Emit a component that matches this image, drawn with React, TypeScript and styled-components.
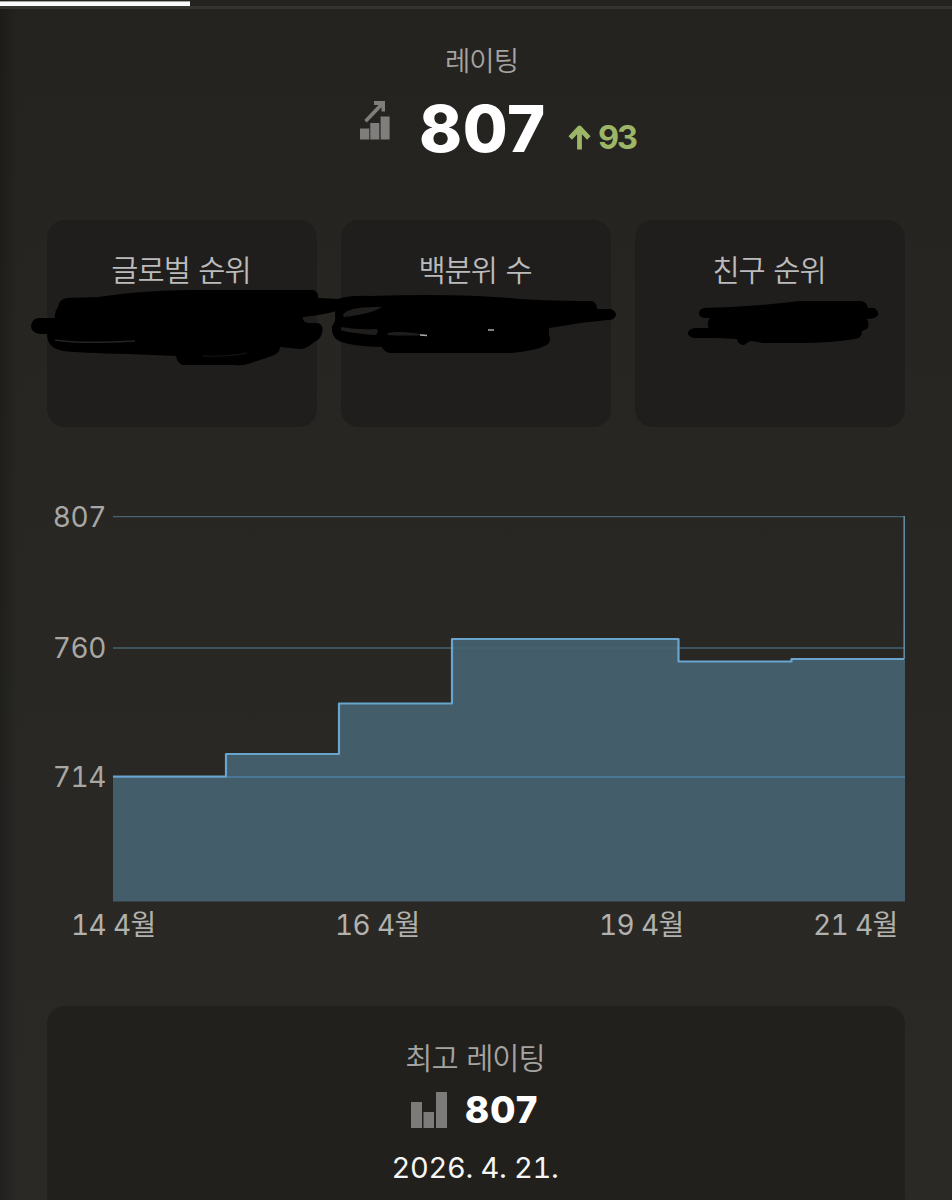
import React from 'react';
import styled, { createGlobalStyle } from 'styled-components';

const GlobalStyle = createGlobalStyle`
  * { box-sizing: border-box; }
  html, body { margin: 0; background: #272623; }
  body { font-family: Inter, "Noto Sans CJK KR", sans-serif; overflow: hidden; }
`;

const Screen = styled.main`
  width: 952px;
  height: 1200px;
  overflow: hidden;
  background:
    linear-gradient(90deg, rgba(0, 0, 0, 0.22), rgba(0, 0, 0, 0) 18px),
    linear-gradient(#242320 0, #252421 180px, #272622 440px, #292825 800px, #2a2926 1200px);
`;

const TabTrack = styled.div`
  height: 9px;
  padding-top: 1px;
  background: linear-gradient(transparent 6px, #353431 6px);
`;

const TabIndicator = styled.div`
  width: 190px;
  height: 5px;
  background: linear-gradient(#a5a5a4 1px, #fafafa 1px);
`;

const Hero = styled.header`
  height: 211px;
  padding-top: 30px;
  display: flex;
  flex-direction: column;
  align-items: center;
`;

const Label = styled.div<{ $color?: string; $size?: number }>`
  font-family: "Noto Sans CJK KR", sans-serif;
  font-weight: 350;
  font-size: ${({ $size }) => $size ?? 29.5}px;
  line-height: 40px;
  letter-spacing: -1px;
  word-spacing: 3px;
  margin-right: 2px;
  color: ${({ $color }) => $color ?? '#a5a4a2'};
  white-space: nowrap;
`;

const HeroTitle = styled.div`
  padding-left: 13px;
`;

const HeroRow = styled.div`
  display: flex;
  width: 276px;
  height: 80px;
  margin: 10px 0 0 44px;
`;

const TrendIcon = styled.svg`
  width: 30px;
  height: 39px;
  margin-top: 12px;
  flex: none;
`;

const Rating = styled.div`
  margin-left: 29px;
  width: 127px;
  font-size: 65px;
  font-weight: 800;
  line-height: 80px;
  letter-spacing: 0.6px;
  color: #fff;
`;

const Delta = styled.div`
  display: flex;
  margin: 29px 0 0 22px;
  gap: 7px;
  font-size: 32.5px;
  font-weight: 750;
  line-height: 40px;
  letter-spacing: -2px;
  color: #9cb567;
`;

const ArrowIcon = styled.svg`
  width: 23px;
  height: 26px;
  margin-top: 6px;
`;

const Ranks = styled.section`
  position: relative;
  display: grid;
  grid-template-columns: repeat(3, 270px);
  gap: 24px;
  padding-left: 47px;
  height: 207px;
`;

const RankCard = styled.div`
  display: flex;
  justify-content: center;
  padding-top: 28px;
  border-radius: 18px;
  background: #1f1e1c;
`;

const Marker = styled.svg`
  position: absolute;
  left: 0;
  top: 0;
  width: 952px;
  height: 207px;
`;

const Chart = styled.section`
  display: grid;
  grid-template-columns: 106px 792px;
  column-gap: 7px;
  margin-top: 89px;
`;

const YAxis = styled.div`
  display: flex;
  flex-direction: column;
  align-items: flex-end;
  margin-top: -19px;
`;

const YTick = styled.div<{ $space: number }>`
  height: ${({ $space }) => $space}px;
  font-size: 28px;
  font-variant-numeric: tabular-nums;
  line-height: 40px;
  letter-spacing: -0.4px;
  color: #a8a7a4;
`;

const Plot = styled.svg`
  display: block;
  width: 792px;
  height: 386px;
`;

const XAxis = styled.div`
  display: grid;
  grid-template-columns: 264px 264px 214px auto;
  padding-left: 71px;
  height: 104px;
`;

const XTick = styled.div`
  padding-top: 3px;
  font-family: Inter, "Noto Sans CJK KR", sans-serif;
  font-weight: 380;
  font-size: 28px;
  font-variant-numeric: tabular-nums;
  line-height: 40px;
  letter-spacing: -0.6px;
  color: #b2b1ae;
  white-space: nowrap;
`;

const PeakCard = styled.section`
  display: flex;
  flex-direction: column;
  align-items: center;
  width: 858px;
  height: 260px;
  margin-left: 47px;
  padding-top: 30px;
  border-radius: 18px;
  background: #21201d;
`;

const PeakRow = styled.div`
  display: flex;
  align-items: center;
  gap: 18px;
  height: 44px;
  margin: 12px 3px 0 0;
`;

const BarsIcon = styled.svg`
  width: 36px;
  height: 36px;
`;

const PeakValue = styled.div`
  font-size: 37px;
  font-weight: 800;
  line-height: 44px;
  letter-spacing: 0.8px;
  color: #fff;
`;

const PeakDate = styled.div`
  margin: 16px 2px 0 0;
  font-size: 29px;
  font-variant-numeric: tabular-nums;
  line-height: 40px;
  letter-spacing: -0.3px;
  color: #f6f6f5;
`;

const ranks = ['글로벌 순위', '백분위 수', '친구 순위'];
const yTicks = [
  { value: 807, space: 131 },
  { value: 760, space: 129 },
  { value: 714, space: 40 },
];
const xTicks = ['14 4월', '16 4월', '19 4월', '21 4월'];
const steps = 'M0 260.5H113V238H226V187.5H339V123H565.5V145.5H678.5V143H791';

export default function App() {
  return (
    <Screen>
      <GlobalStyle />
      <TabTrack><TabIndicator /></TabTrack>
      <Hero>
        <HeroTitle><Label $size={27.5}>레이팅</Label></HeroTitle>
        <HeroRow>
          <TrendIcon viewBox="0 0 30 39" fill="#7f7e7d">
            <path d="M0 27.500h9.300V38.500H0zM10.300 22h9v16.500h-9zM20.600 15.500h9v23h-9z" />
            <path d="M14 0h11v10.500h-3.500V6.300L6.800 21.500l-2.600-2.600L18.500 4H14z" />
          </TrendIcon>
          <Rating>807</Rating>
          <Delta>
            <ArrowIcon viewBox="0 0 23 26" fill="none" stroke="#9cb567" strokeWidth="4.800">
              <path d="M11.500 25.500V4M2.200 14L11.500 4L20.800 14" strokeLinejoin="round" />
            </ArrowIcon>
            93
          </Delta>
        </HeroRow>
      </Hero>

      <Ranks>
        {ranks.map((name) => (
          <RankCard key={name}><Label $color="#bcbbbc">{name}</Label></RankCard>
        ))}
        <Marker viewBox="0 220 952 207" fill="#000">
          <path d="M38 318H55Q54 312 58 307Q59 299 67 298L98 297Q136 291 187 290H313Q319 292 318 298L338 299Q346 301 345 307Q338 313 303 317Q302 322 309 323H318Q324 325 322 333Q321 339 313 343Q306 349 300 349L280 347Q280 353 272 356L248 364Q242 366 234 365H183Q177 363 176 356L128 354Q80 353 63 351Q47 348 47 334H39Q31 332 31 326Q32 319 38 318Z" />
          <path d="M55 340Q80 344 135 341" fill="none" stroke="#24231f" strokeWidth="1.5" />
          <path d="M203 356Q230 357 247 353" fill="none" stroke="#171715" strokeWidth="1" />
          <path fillRule="evenodd" d="M338 299Q350 295 370 296Q450 293 510 298Q536 301 592 301Q597 303 597 309L611 309Q616 311 616 315Q615 320 608 320L580 323Q570 325 549 328L549 335Q552 341 547 345Q535 351 511 353H390Q384 352 382 347Q345 346 336 339Q331 334 332 326Q336 322 335 315Q335 307 338 299ZM343 315Q347 306 382 307Q371 314 344 317ZM341 327Q358 330 377 329Q379 333 375 335Q348 333 341 330ZM388 333Q401 330 427 335Q405 336 387 335Z" />
          <path d="M420 335L427 335.500M488 330H494" fill="none" stroke="#aaa" strokeWidth="1.5" />
          <path d="M704 308Q750 307 800 301H861Q867 302 868 308L874 308Q879 311 878 315Q876 319 867 319Q870 325 867 329L862 331Q862 338 855 339Q830 343 800 343H763Q754 341 750 341L744 345Q738 345 737 339L716 338H693Q687 336 688 332Q690 328 697 328H709Q706 323 710 318H704Q699 317 699 313Q699 309 704 308Z" />
        </Marker>
      </Ranks>

      <Chart>
        <YAxis>
          {yTicks.map((tick) => <YTick key={tick.value} $space={tick.space}>{tick.value}</YTick>)}
        </YAxis>
        <Plot viewBox="0 0 792 386" fill="none">
          <path d={`${steps}H792V385.500H0Z`} fill="#435d6b" />
          <path d="M0 .500H792M0 132H792" stroke="#466372" strokeWidth="1.300" />
          <path d="M0 261H792" stroke="#4f7fa5" strokeWidth="1.400" />
          <path d="M791.200 0V143" stroke="#62899f" strokeWidth="1.600" />
          <path d={steps} stroke="#69a5ce" strokeWidth="2.200" strokeLinejoin="round" />
        </Plot>
      </Chart>
      <XAxis>
        {xTicks.map((tick) => <XTick key={tick}>{tick}</XTick>)}
      </XAxis>

      <PeakCard>
        <Label>최고 레이팅</Label>
        <PeakRow>
          <BarsIcon viewBox="0 0 36 36" fill="#7c7b7a">
            <path d="M0 10h11v26H0zM12.500 20h10.500v16H12.500zM25 0h11v36H25z" />
          </BarsIcon>
          <PeakValue>807</PeakValue>
        </PeakRow>
        <PeakDate>2026. 4. 21.</PeakDate>
      </PeakCard>
    </Screen>
  );
}
